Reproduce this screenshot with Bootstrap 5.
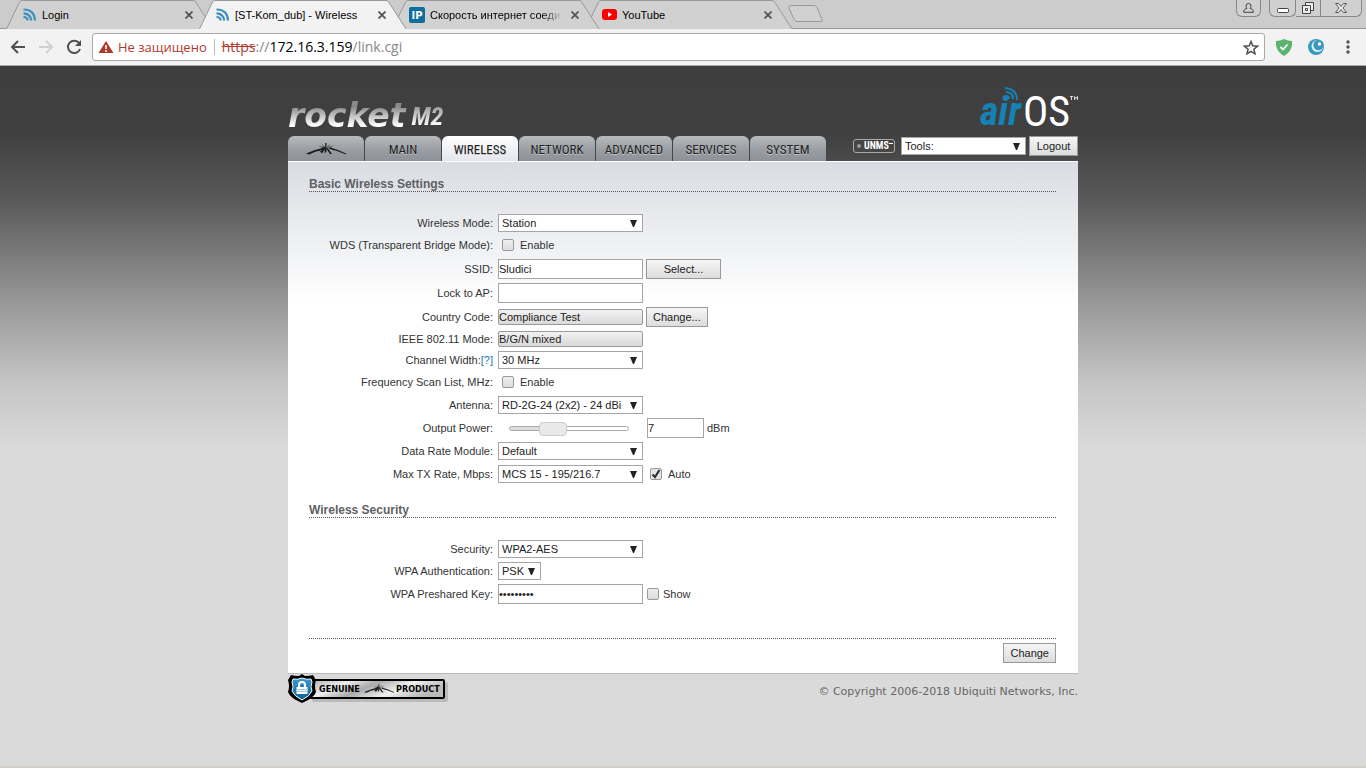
<!DOCTYPE html>
<html lang="en">
<head>
<meta charset="utf-8">
<meta name="viewport" content="width=device-width, initial-scale=1">
<title>[ST-Kom_dub] - Wireless</title>
<link rel="stylesheet" href="https://cdn.jsdelivr.net/npm/bootstrap@5.3.0/dist/css/bootstrap.min.css">
<style>
body{font-family:"Liberation Sans",Arial,sans-serif;font-size:11px;line-height:14px;color:#333;background:#dadada}
a{text-decoration:none}
svg{flex:none;display:block}
/* browser frame */
.strip{height:29px;background:#ccc;padding-left:6px;border-bottom:1px solid #999}
.strip .tabs-list{isolation:isolate}
.btab{position:relative;width:208px;margin-right:-15px;height:29px;color:#000;padding:0 17px 0 17px;gap:5px}
.btab .shape{position:absolute;inset:0;z-index:-1;fill:#d1d1d1;stroke:#999}
.btab.current .shape{fill:#f2f2f2}
.btab .ttl{overflow:hidden;white-space:nowrap;flex:1;min-width:0}
.btab .fade-end{-webkit-mask-image:linear-gradient(90deg,#000 85%,transparent)}
.btab .x{border:0;background:none;padding:0 4px}
.wbtn{height:17px;border:1px solid #888;border-top:0;background:#d0d0d0;padding:0;display:flex;align-items:center;justify-content:center}
.toolbar{height:37px;background:#f2f2f2;border-bottom:1px solid #aaa;padding:0 10px;font-family:"Open Sans",sans-serif;font-size:14px}
.tool{border:0;background:none;padding:0}
.newtab{margin-left:10px}
.omni{height:28px;border:1px solid #aaa;border-radius:3px;background:#fff;color:#888;padding:0 5px;margin:0 7px 0 10px}
.omni .warn{color:#b0392c}
.omni .state{font-size:13px}
.omni .sep{width:1px;height:16px;background:#bbb;margin:0 7px}
/* device page */
.stage{background:linear-gradient(#3e3e3e 0,#404040 68px,#5a5a5a 135px,#838383 202px,#ababab 269px,#c6c6c6 320px,#dadada 382px);border-bottom:2px solid #d4d0c8}
.wrap{max-width:790px}
.brand{height:70px}
.rocket{font:italic bold 33px/32px "DejaVu Sans",sans-serif;background:linear-gradient(#888 20%,#fff 80%);-webkit-background-clip:text;color:transparent;padding-right:2px}
.model{font:italic bold 26px/32px "Roboto Condensed",sans-serif;background:linear-gradient(#999 20%,#fff 80%);-webkit-background-clip:text;color:transparent;padding-right:2px}
.air{font:italic bold 40px/40px "Roboto Condensed",sans-serif;color:#1482b4;position:relative}
.air svg{position:absolute;left:25px;top:-5px}
.os{font:42px/40px "Roboto Condensed",sans-serif;color:#fff;margin-left:2px}
.mtab{width:76px;height:25px;border-radius:6px 6px 0 0;background:linear-gradient(#b8babc,#9a9da3 55%,#8d9198);color:#222;font:13px/16px "Roboto Condensed",sans-serif;text-shadow:0 1px 0 #c4c6ca;padding-top:2px}
.mtab:hover{color:#000}
.mtab.current{background:linear-gradient(#fff,#e4e6ec)}
.unms{width:42px;height:14px;border:1px solid #aaa;border-radius:3px;color:#fff;font:bold 10px/12px "Roboto Condensed",sans-serif;padding:0 2px 0 3px;margin:3px 6px 0 0}
.unms .dot{flex:none;width:4px;height:4px;border-radius:50%;background:#999;margin-right:3px}
.sel,.inp{border:1px solid #a5a5a5;border-radius:0;background:#fff;color:#222;width:145px;font-size:11px}
.sel{appearance:none;height:18px;padding:0 16px 0 3px;background:#fff url("data:image/svg+xml,%3Csvg xmlns='http://www.w3.org/2000/svg' width='7' height='7'%3E%3Cpath d='M0 0h7L4 7H3z' fill='%23222'/%3E%3C/svg%3E") no-repeat right 5px center}
.inp{height:20px;padding:0}
.inp[readonly]{height:16px;background:linear-gradient(#f2f2f2,#d9d9d9);border-color:#999;border-radius:2px}
.w-tools{width:125px;margin:1px 3px 0 0}.w-psk{width:43px}.w-num{width:57px}
.gbtn{height:20px;border:1px solid #999;border-radius:0;background:linear-gradient(#f6f6f6,#dcdcdc);color:#222;font-size:11px;line-height:14px;padding:0 6px}
.gbtn.wide{width:75px}.gbtn.out{width:49px}
.gap-l{margin-left:3px}
.panel{border-top:1px solid #fff;border-bottom:1px solid #bbb;background:#fff linear-gradient(#d9dce2,#fff 140px) no-repeat;padding:15px 22px 10px 21px}
.sect{font-size:12px;line-height:14px;font-weight:bold;color:#5f6165;border-bottom:1px dotted #555;margin:0 0 21px}
.line{height:24px}
.line.mid{height:22px}.line.low{height:20px}
.group-end{margin-bottom:18px}
.group-end + .sect{margin-bottom:20px}
.lab{width:184px;margin-right:5px;text-align:right;white-space:nowrap}
.lab a{color:#1a7ab0}
.chk{appearance:none;width:12px;height:12px;margin:0;border:1px solid #999;border-radius:2px;background:linear-gradient(#eee,#dcdcdc)}
.chk + .opt{padding-left:6px}
.chk:checked{background:url("data:image/svg+xml,%3Csvg xmlns='http://www.w3.org/2000/svg' viewBox='0 0 10 10'%3E%3Cpath d='M1.500 5.500 4 8l4.500-7' fill='none' stroke='%23333' stroke-width='2.200'/%3E%3C/svg%3E") #e6e6e6}
.slide{width:145px;padding:0 14px 0 11px}
.slide input{appearance:none;display:block;width:120px;height:14px;margin:0;background:none}
.slide input::-webkit-slider-runnable-track{height:5px;border:1px solid #aaa;border-radius:3px;background:linear-gradient(90deg,#ddd 35%,#fff 35%)}
.slide input::-webkit-slider-thumb{appearance:none;width:28px;height:14px;margin-top:-5px;border:1px solid #ccc;border-radius:4px;background:#e9e9e9}
.foot{border-top:1px dotted #555;padding-top:4px;margin-top:32px}
.copy{font:11px/14px "DejaVu Sans",Verdana,sans-serif;color:#666;padding-top:11px}
</style>
</head>
<body>
<svg width="0" height="0" class="position-absolute" aria-hidden="true">
<defs>
<symbol id="edge" viewBox="0 0 208 29"><path d="M.5 29 13.500 2Q14.500.5 16 .5H187q2 0 3 2L207 29"/></symbol>
<symbol id="feed" viewBox="0 0 13 13"><g fill="none" stroke="#3d8fc0" stroke-width="2.200"><path d="M0 1.500Q11 1.500 11.500 12.500M0 5.300Q7 5.500 7.700 12.500M0 9Q4 9 4 12.500"/></g></symbol>
<symbol id="cross" viewBox="0 0 8 8"><path d="M.5.5l7 7m0-7-7 7" stroke="#555" stroke-width="1.800"/></symbol>
<symbol id="mark-ubnt" viewBox="0 0 40 13"><path fill="#1c1c1c" d="M0 10.500 9 7 18 4.500 21 5 13 8 10 8.500 3 11.500zM40 11.500 31 8 27 7 20 4.500 23 4 32 7 40 10.500zM14 8.500l4-3 1 .5-3 4.500zM19 5.500l1.500 0 0 3-2 2zM20.500 6l2 0 3.500 5h-2zM12 2.500l8 2.500-1 1zM28 2.500l-8 2.500 1 1zM19.200 0h1.300v5h-1.300zM15.500 1l4 3.500-.8.500zM24.500 1l-4 3.500.8.500z"/></symbol>
</defs>
</svg>
<div class="min-vh-100 d-flex flex-column">
<header>
  <div class="strip d-flex justify-content-between">
    <nav class="tabs-list d-flex" aria-label="Open tabs">
      <div class="btab d-flex align-items-center z-2"><svg class="shape" width="208" height="29"><use href="#edge"/></svg><svg width="14" height="13"><use href="#feed"/></svg><a class="ttl text-reset" href="#">Login</a><button class="x" aria-label="Close"><svg width="8" height="8"><use href="#cross"/></svg></button></div>
      <div class="btab current d-flex align-items-center z-3"><svg class="shape" width="208" height="29"><use href="#edge"/></svg><svg width="14" height="13"><use href="#feed"/></svg><a class="ttl text-reset" href="#">[ST-Kom_dub] - Wireless</a><button class="x" aria-label="Close"><svg width="8" height="8"><use href="#cross"/></svg></button></div>
      <div class="btab d-flex align-items-center z-2"><svg class="shape" width="208" height="29"><use href="#edge"/></svg><svg width="16" height="16"><rect width="16" height="16" rx="2" fill="#0e6f9e"/><text x="8" y="12" fill="#fff" text-anchor="middle" font-family="DejaVu Sans" font-weight="bold" font-size="10">IP</text></svg><a class="ttl fade-end text-reset" href="#">Скорость интернет соеди</a><button class="x" aria-label="Close"><svg width="8" height="8"><use href="#cross"/></svg></button></div>
      <div class="btab d-flex align-items-center z-1"><svg class="shape" width="208" height="29"><use href="#edge"/></svg><svg width="15" height="11"><rect width="15" height="11" rx="3" fill="#f00"/><path d="M6 3v5l4-2.500z" fill="#fff"/></svg><a class="ttl text-reset" href="#">YouTube</a><button class="x" aria-label="Close"><svg width="8" height="8"><use href="#cross"/></svg></button></div>
      <button class="tool newtab" aria-label="New tab"><svg width="35" height="18"><path d="M3 .5h23q2 0 3 2l5 12q1 2-1 2H9q-2 0-3-2L1 3Q.5.500 3 .5z" fill="#d1d1d1" stroke="#999"/></svg></button>
    </nav>
    <div class="d-flex gap-2 pe-1">
      <button class="wbtn rounded-bottom" aria-label="Profile"><svg width="23" height="14"><path d="M9 5a2.500 2.500 0 1 1 5 0q0 1.500-1 2.200l2.500 1.300q.8.500.8 2.800H6.700q0-2.300.8-2.800L10 7.200Q9 6.500 9 5z" fill="none" stroke="#444"/></svg></button>
      <div class="d-flex">
        <button class="wbtn rounded-bottom rounded-end-0" aria-label="Minimize"><svg width="25" height="14"><rect x="7.500" y="7.500" width="11" height="4" rx="1" fill="#fff" stroke="#444"/></svg></button>
        <button class="wbtn border-start-0" aria-label="Restore"><svg width="24" height="14"><g fill="#eee" stroke="#444"><path d="M9.500 1.500h8v8h-8z"/><path d="M6.500 4.500h8v8h-8z"/><path d="M9.500 7.500h2v2h-2z"/></g></svg></button>
        <button class="wbtn border-start-0 rounded-bottom rounded-start-0" aria-label="Close window"><svg width="40" height="14"><path d="M14.500 2.500h3l2.500 3 2.500-3h3L22 7l3.500 4.500h-3l-2.500-3-2.500 3h-3L18 7z" fill="#eee" stroke="#555"/></svg></button>
      </div>
    </div>
  </div>
  <div class="toolbar d-flex align-items-center">
    <button class="tool" aria-label="Back"><svg width="16" height="14"><path d="M15 7H2m6-6L2 7l6 6" fill="none" stroke="#505050" stroke-width="2"/></svg></button>
    <button class="tool ms-2 ps-1" aria-label="Forward"><svg width="16" height="14"><path d="M1 7h13M8 1l6 6-6 6" fill="none" stroke="#d0d0d0" stroke-width="2"/></svg></button>
    <button class="tool ms-2 ps-1" aria-label="Reload"><svg width="16" height="16"><path d="M13.200 4.200A6.200 6.200 0 1 0 14 10" fill="none" stroke="#505050" stroke-width="2"/><path d="M15 1v6H9z" fill="#505050"/></svg></button>
    <div class="omni d-flex align-items-center flex-grow-1" role="textbox" aria-label="Address">
      <svg width="16" height="14"><path d="M8 1l7.500 12H.5z" fill="#b0392c"/><path d="M7.200 5h1.600v4H7.200zm0 5h1.600v2H7.200z" fill="#fff"/></svg>
      <span class="warn state ms-1">Не защищено</span><span class="sep"></span>
      <span class="flex-grow-1"><s class="warn">https</s>://<span class="text-black">172.16.3.159</span>/link.cgi</span>
      <button class="tool" aria-label="Bookmark"><svg width="16" height="15"><path d="M8 1.500l1.800 4.300 4.700.4-3.600 3 1.100 4.600-4-2.500-4 2.500 1.100-4.600-3.600-3 4.700-.4z" fill="none" stroke="#505050" stroke-width="1.500"/></svg></button>
    </div>
    <div class="d-flex align-items-center gap-3 ms-1">
      <button class="tool" aria-label="Shield"><svg width="16" height="17"><path d="M8 0q4 2 8 2 1 10-8 15Q-1 12 0 2q4 0 8-2z" fill="#5cb36b"/><path d="M4.500 8 7 10.500 11.500 5.500" fill="none" stroke="#fff" stroke-width="1.800"/></svg></button>
      <button class="tool" aria-label="Extension"><svg width="16" height="16"><circle cx="8" cy="8" r="8" fill="#3999bd"/><circle cx="9.500" cy="7" r="6" fill="#e8f3f7"/><circle cx="10.500" cy="6" r="5.200" fill="#3999bd"/><circle cx="11.500" cy="5" r="1.700" fill="#fff"/></svg></button>
      <button class="tool" aria-label="Menu"><svg width="16" height="16"><g fill="#505050"><circle cx="8" cy="3" r="1.700"/><circle cx="8" cy="8" r="1.700"/><circle cx="8" cy="13" r="1.700"/></g></svg></button>
    </div>
  </div>
</header>
<div class="stage flex-grow-1">
<div class="wrap mx-auto">
  <div class="brand d-flex justify-content-between align-items-end">
    <div class="d-flex align-items-end pb-1"><span class="rocket">rocket</span><span class="model ms-1">M2</span></div>
    <div class="d-flex align-items-end pb-1"><span class="air">air<svg width="14" height="14"><path d="M0 1Q12 2 12 13M1 5q7 0 7 7M1 9q3 0 3 3" fill="none" stroke="#1482b4" stroke-width="2"/></svg></span><span class="os">OS</span><svg class="align-self-start" width="8" height="16"><path d="M0 4.500h3M1.500 4.500v3.500M4.500 8v-3.500l1.500 2 1.500-2V8" fill="none" stroke="#ddd"/></svg></div>
  </div>
  <div class="d-flex justify-content-between">
    <nav class="d-flex" style="gap:1px" aria-label="Sections">
      <a class="mtab d-flex align-items-center justify-content-center" href="#" aria-label="Ubiquiti"><svg width="40" height="13"><use href="#mark-ubnt"/></svg></a>
      <a class="mtab d-flex align-items-center justify-content-center" href="#">MAIN</a>
      <a class="mtab current d-flex align-items-center justify-content-center" href="#">WIRELESS</a>
      <a class="mtab d-flex align-items-center justify-content-center" href="#">NETWORK</a>
      <a class="mtab d-flex align-items-center justify-content-center" href="#">ADVANCED</a>
      <a class="mtab d-flex align-items-center justify-content-center" href="#">SERVICES</a>
      <a class="mtab d-flex align-items-center justify-content-center" href="#">SYSTEM</a>
    </nav>
    <div class="d-flex align-items-start">
      <a class="unms d-flex align-items-center" href="#"><span class="dot"></span>UNMS<svg width="4" height="9"><path d="M0 1.500h4" stroke="#fff"/></svg></a>
      <select class="sel w-tools" aria-label="Tools"><option>Tools:</option></select>
      <button class="gbtn out">Logout</button>
    </div>
  </div>
  <main class="panel">
    <h2 class="sect">Basic Wireless Settings</h2>
    <div class="line low d-flex align-items-center"><label class="lab" for="mode">Wireless Mode:</label><select class="sel" id="mode"><option>Station</option></select></div>
    <div class="line d-flex align-items-center"><label class="lab" for="wds">WDS (Transparent Bridge Mode):</label><input class="chk ms-1" type="checkbox" id="wds"><label class="opt" for="wds">Enable</label></div>
    <div class="line d-flex align-items-center"><label class="lab" for="ssid">SSID:</label><input class="inp" id="ssid" value="Sludici"><button class="gbtn wide gap-l">Select...</button></div>
    <div class="line d-flex align-items-center"><label class="lab" for="lock">Lock to AP:</label><input class="inp" id="lock"></div>
    <div class="line d-flex align-items-center"><label class="lab" for="country">Country Code:</label><input class="inp" id="country" value="Compliance Test" readonly><button class="gbtn gap-l">Change...</button></div>
    <div class="line low d-flex align-items-center"><label class="lab" for="ieee">IEEE 802.11 Mode:</label><input class="inp" id="ieee" value="B/G/N mixed" readonly></div>
    <div class="line mid d-flex align-items-center"><label class="lab" for="width">Channel Width:<a href="#">[?]</a></label><select class="sel" id="width"><option>30 MHz</option></select></div>
    <div class="line mid d-flex align-items-center"><label class="lab" for="scan">Frequency Scan List, MHz:</label><input class="chk ms-1" type="checkbox" id="scan"><label class="opt" for="scan">Enable</label></div>
    <div class="line d-flex align-items-center"><label class="lab" for="ant">Antenna:</label><select class="sel" id="ant"><option>RD-2G-24 (2x2) - 24 dBi</option></select></div>
    <div class="line mid d-flex align-items-center"><label class="lab" for="power">Output Power:</label><div class="slide"><input type="range" id="power" min="0" max="22" value="7"></div><input class="inp w-num ms-1" value="7" aria-label="Output power, dBm"><span class="gap-l">dBm</span></div>
    <div class="line d-flex align-items-center"><label class="lab" for="rate">Data Rate Module:</label><select class="sel" id="rate"><option>Default</option></select></div>
    <div class="line mid d-flex align-items-center group-end"><label class="lab" for="tx">Max TX Rate, Mbps:</label><select class="sel me-1" id="tx"><option>MCS 15 - 195/216.7</option></select><span class="gap-l d-flex align-items-center"><input class="chk" type="checkbox" id="auto" checked><label class="opt" for="auto">Auto</label></span></div>
    <h2 class="sect">Wireless Security</h2>
    <div class="line mid d-flex align-items-center"><label class="lab" for="sec">Security:</label><select class="sel" id="sec"><option>WPA2-AES</option></select></div>
    <div class="line mid d-flex align-items-center"><label class="lab" for="auth">WPA Authentication:</label><select class="sel w-psk" id="auth"><option>PSK</option></select></div>
    <div class="line d-flex align-items-center"><label class="lab" for="key">WPA Preshared Key:</label><input class="inp" type="password" id="key" value="123456789"><input class="chk mx-1" type="checkbox" id="show"><label for="show">Show</label></div>
    <div class="foot text-end"><button class="gbtn">Change</button></div>
  </main>
  <footer class="d-flex justify-content-between align-items-start">
    <svg width="164" height="34" role="img" aria-label="Genuine product">
      <defs><linearGradient id="steel" x2="1" y2=".3"><stop offset="0" stop-color="#aaa"/><stop offset=".3" stop-color="#eee"/><stop offset=".5" stop-color="#aaa"/><stop offset=".75" stop-color="#f0f0f0"/><stop offset="1" stop-color="#bbb"/></linearGradient><linearGradient id="blue" x2="0" y2="1"><stop stop-color="#3c9bd0"/><stop offset="1" stop-color="#0c5f97"/></linearGradient></defs>
      <rect x="24" y="8" width="136" height="20" rx="2" fill="#999" opacity=".5"/>
      <rect x="20" y="6" width="136" height="18" rx="1" fill="url(#steel)" stroke="#000" stroke-width="2"/>
      <path d="M14 0l3 2q5 0 8-1l3 5q-2 6 0 12-2 6-14 11Q2 24 0 18q2-6 0-12l3-5q3 1 8 1z" fill="#000"/>
      <path d="M14 4q5 2 9 1l1 3q-2 5 0 9-2 5-10 9-8-4-10-9 2-4 0-9l1-3q4 1 9-1z" fill="url(#blue)" stroke="#fff"/>
      <path d="M8.500 13H10v-2a4 4 0 0 1 8 0v2h1.500v7h-11zM12 13h4v-2a2 2 0 0 0-4 0z" fill="#fff" fill-rule="evenodd"/>
      <path d="M9 15.500h10M9 17.500h10" stroke="#9cc4dd"/>
      <g font-family="DejaVu Sans Condensed, DejaVu Sans" font-weight="bold" font-size="9"><text x="31" y="18">GENUINE</text><text x="108" y="18">PRODUCT</text></g>
      <svg x="76" y="10" width="30" height="10"><use href="#mark-ubnt"/></svg>
    </svg>
    <span class="copy">© Copyright 2006-2018 Ubiquiti Networks, Inc.</span>
  </footer>
</div>
</div>
</div>
<script src="https://cdn.jsdelivr.net/npm/bootstrap@5.3.0/dist/js/bootstrap.bundle.min.js"></script>
</body>
</html>
